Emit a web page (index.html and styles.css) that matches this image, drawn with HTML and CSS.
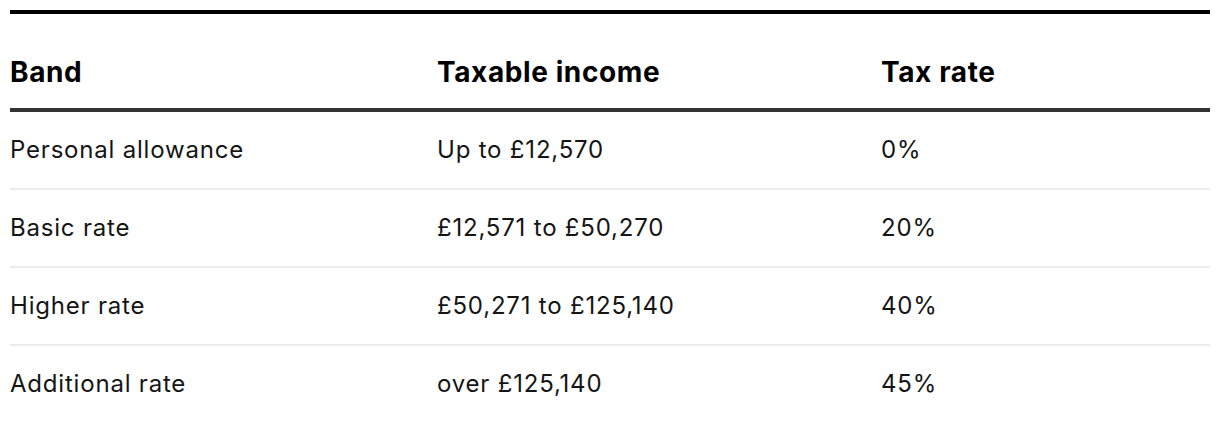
FILE: index.html
```html
<!DOCTYPE html>
<html lang="en">
<head>
<meta charset="utf-8">
<title>Income tax bands</title>
<link rel="stylesheet" href="styles.css">
</head>
<body>
<div class="wrap">
  <table class="tax-table">
    <thead>
      <tr>
        <th class="col-band">Band</th>
        <th class="col-income">Taxable income</th>
        <th class="col-rate">Tax rate</th>
      </tr>
    </thead>
    <tbody>
      <tr><td>Personal allowance</td><td>Up to £12,570</td><td>0%</td></tr>
      <tr><td>Basic rate</td><td>£12,571 to £50,270</td><td>20%</td></tr>
      <tr><td>Higher rate</td><td>£50,271 to £125,140</td><td>40%</td></tr>
      <tr><td>Additional rate</td><td>over £125,140</td><td>45%</td></tr>
    </tbody>
  </table>
</div>
</body>
</html>
```
FILE: styles.css
```css
html, body {
  margin: 0;
  padding: 0;
  background: #fff;
}
body {
  font-family: Inter, "Noto Sans", sans-serif;
  color: #151515;
}
.wrap {
  padding: 10px 10px 0 10px;
}
.tax-table {
  width: 1200px;
  border-collapse: collapse;
  table-layout: fixed;
  border-top: 4px solid #000;
}
.col-band { width: 427px; }
.col-income { width: 444px; }
.tax-table th {
  text-align: left;
  font-weight: 700;
  font-size: 28px;
  letter-spacing: 0.6px;
  line-height: 36px;
  padding: 40px 0 18px 0;
  border-bottom: 4px solid #333;
  color: #000;
}
.tax-table td {
  font-size: 24px;
  letter-spacing: 0.8px;
  line-height: 30px;
  padding: 23px 0;
  border-bottom: 2px solid #ececec;
  font-weight: 400;
}
.tax-table tbody tr:last-child td {
  border-bottom: none;
}
```
